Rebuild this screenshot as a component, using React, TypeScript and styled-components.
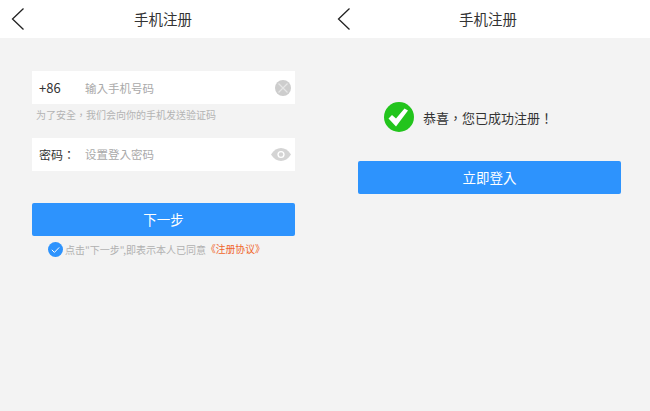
import React from "react";
import styled, { createGlobalStyle } from "styled-components";

const GlobalStyle = createGlobalStyle`
  html, body {
    margin: 0;
    padding: 0;
    background: #f3f3f3;
    font-family: "Noto Sans CJK TC", "Liberation Sans", sans-serif;
  }
`;

const Page = styled.div`
  display: grid;
  grid-template-columns: 326px 324px;
  width: 650px;
  height: 411px;
  overflow: hidden;
`;

const Screen = styled.div`
  display: flex;
  flex-direction: column;
`;

const Header = styled.div`
  position: relative;
  height: 38px;
  padding-bottom: 2px;
  box-sizing: border-box;
  background: #fff;
  display: flex;
  align-items: center;
  justify-content: center;
  font-size: 14.5px;
  color: #333;
`;

const BackIcon = styled.svg`
  position: absolute;
  left: 11px;
  top: 7px;
`;

const Body = styled.div<{ $top: number; $left: number }>`
  display: flex;
  flex-direction: column;
  padding: ${(p) => p.$top}px 0 0 ${(p) => p.$left}px;
  width: 263px;
`;

const Field = styled.div`
  display: flex;
  align-items: center;
  height: 33px;
  background: #fff;
  padding-left: 7px;
  padding-right: 4px;
`;

const FieldLabel = styled.span<{ $small?: boolean }>`
  width: 46px;
  font-size: ${(p) => (p.$small ? 12 : 13)}px;
  color: #333;
`;

const Placeholder = styled.span`
  flex: 1;
  font-size: 11.5px;
  color: #a9a9a9;
`;

const Hint = styled.div`
  height: 33.5px;
  padding: 4px 0 0 4px;
  box-sizing: border-box;
  font-size: 10px;
  line-height: 14px;
  color: #b4b4b4;
`;

const Button = styled.div<{ $gap: number }>`
  margin-top: ${(p) => p.$gap}px;
  height: 33px;
  padding-bottom: 1px;
  box-sizing: border-box;
  background: #2d93fd;
  border-radius: 2px;
  color: #fff;
  font-size: 13.5px;
  display: flex;
  align-items: center;
  justify-content: center;
`;

const Agreement = styled.div`
  display: flex;
  align-items: center;
  height: 16px;
  margin-top: 5px;
  padding-left: 16px;
  font-size: 10px;
  color: #b0b0b0;
  white-space: nowrap;
`;

const AgreementLink = styled.span`
  color: #f0652a;
  font-size: 9.8px;
`;

const CheckBadge = styled.svg`
  margin-right: 2px;
`;

const Success = styled.div`
  display: flex;
  align-items: center;
  gap: 9px;
  padding-left: 26px;
  height: 30px;
  font-size: 13px;
  color: #333;
`;

const CheckIcon = () => (
  <CheckBadge width="15" height="15" viewBox="0 0 15 15">
    <circle cx="7.5" cy="7.5" r="7.5" fill="#2d93fd" />
    <path d="M3.8 7.8l2.6 2.6 4.8-5" fill="none" stroke="#fff" strokeWidth="1" />
  </CheckBadge>
);

const App: React.FC = () => {
  return (
    <>
      <GlobalStyle />
      <Page>
        <Screen>
          <Header>
            <BackIcon width="14" height="24" viewBox="0 0 14 24">
              <path d="M12.5 1.5L1.5 12l11 10.5" fill="none" stroke="#222" strokeWidth="1.3" />
            </BackIcon>
            手机注册
          </Header>
          <Body $top={33} $left={32}>
            <Field>
              <FieldLabel>+86</FieldLabel>
              <Placeholder>输入手机号码</Placeholder>
              <svg width="16" height="16" viewBox="0 0 16 16">
                <circle cx="8" cy="8" r="8" fill="#cdcdcd" />
                <path d="M3.5 3.5l9 9M12.5 3.5l-9 9" stroke="#e6e6e6" strokeWidth="1.2" />
              </svg>
            </Field>
            <Hint>为了安全，我们会向你的手机发送验证码</Hint>
            <Field>
              <FieldLabel $small>密码：</FieldLabel>
              <Placeholder>设置登入密码</Placeholder>
              <svg width="20" height="13" viewBox="0 0 20 13">
                <path d="M0 6.5C3 2 6.3 0 10 0s7 2 10 6.5C17 11 13.7 13 10 13S3 11 0 6.5z" fill="#d4d4d4" />
                <circle cx="10" cy="6.5" r="3.6" fill="#fff" />
                <circle cx="10" cy="6.5" r="2.2" fill="#d4d4d4" />
              </svg>
            </Field>
            <Button $gap={32.5}>下一步</Button>
            <Agreement>
              <CheckIcon />
              点击"下一步",即表示本人已同意
              <AgreementLink>《注册协议》</AgreementLink>
            </Agreement>
          </Body>
        </Screen>
        <Screen>
          <Header>
            <BackIcon width="14" height="24" viewBox="0 0 14 24">
              <path d="M12.5 1.5L1.5 12l11 10.5" fill="none" stroke="#222" strokeWidth="1.3" />
            </BackIcon>
            手机注册
          </Header>
          <Body $top={64} $left={32}>
            <Success>
              <svg width="30" height="30" viewBox="0 0 30 30">
                <circle cx="15" cy="15" r="15" fill="#22c41c" />
                <path d="M4.5 16.5L8 13l4 3.5L20.5 6.5l3.5 2L12 24.5z" fill="#fff" />
              </svg>
              恭喜，您已成功注册！
            </Success>
            <Button $gap={29}>立即登入</Button>
          </Body>
        </Screen>
      </Page>
    </>
  );
};

export default App;
